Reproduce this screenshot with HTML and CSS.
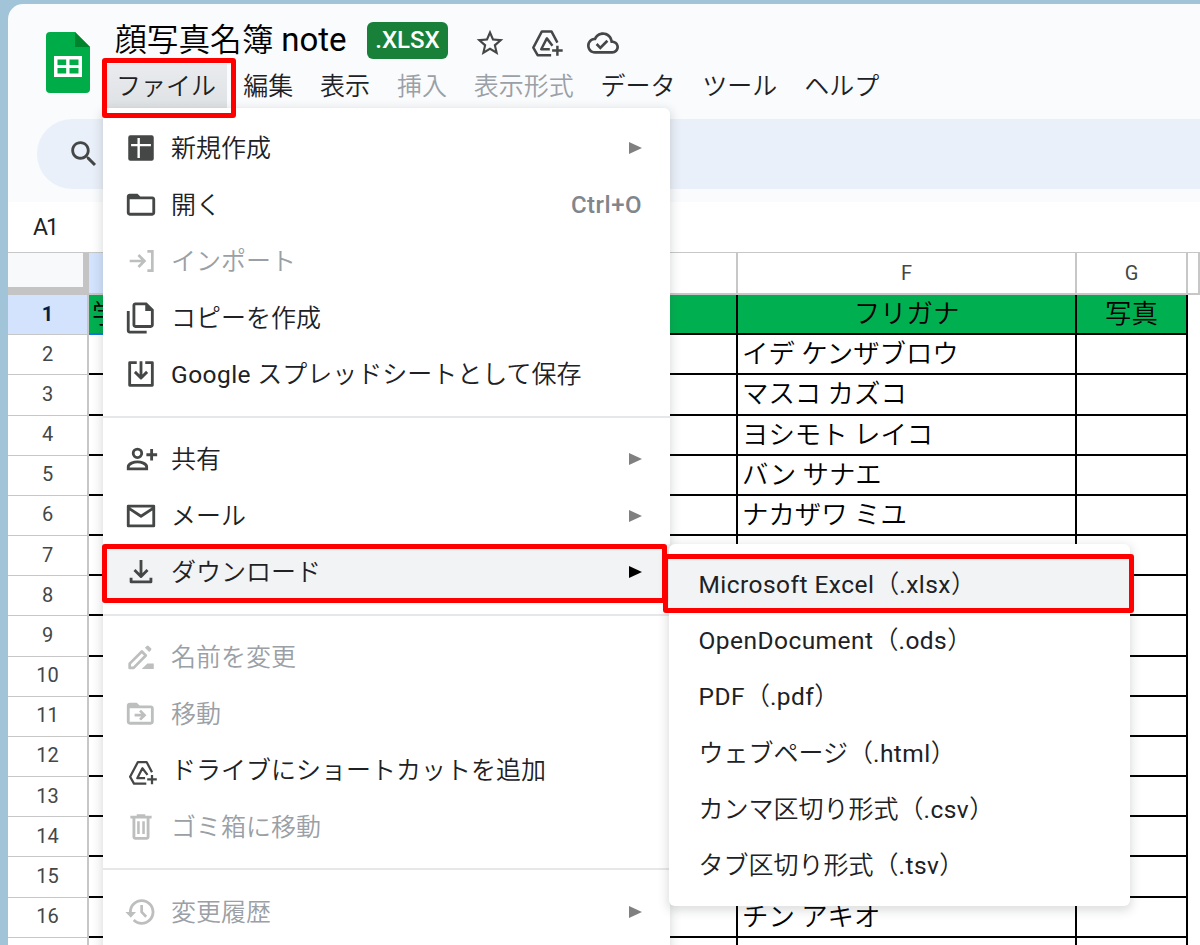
FILE: index.html
```html
<!DOCTYPE html>
<html lang="ja">
<head>
    <meta charset="UTF-8">
    <meta name="viewport" content="width=device-width, initial-scale=1.0">
    <title>顔写真名簿 note</title>
    <link rel="stylesheet" href="styles.css">
</head>
<body>
    <!-- Shared icon shapes -->
    <svg class="sprite">
        <symbol id="drive-add" viewBox="0 0 100 84">
            <path d="M80 41L62 7H33L7 56L20 79H61M65 50L48 28L31 61H57M80 50v31M64 65h32" fill="none" stroke="currentColor" stroke-width="7.500" stroke-linejoin="round"/>
        </symbol>
    </svg>

    <div class="window">
        <header class="header">
            <svg class="logo" viewBox="0 0 44 61">
                <path fill="#00ac47" d="M4 0h25l15 15v42a4 4 0 0 1-4 4H4a4 4 0 0 1-4-4V4a4 4 0 0 1 4-4z"/>
                <path fill="#00832d" d="M29 0l15 15H29z"/>
                <path fill="#fff" fill-rule="evenodd" d="M8 24h28v21H8zM11.500 27.500v5.500h8.700v-5.500zM23.500 27.500v5.500h9v-5.500zM11.500 36v5.500h8.700V36zM23.500 36v5.500h9V36z"/>
            </svg>
            <div class="header-main">
                <div class="title-row">
                    <h1 class="doc-title">顔写真名簿 <span class="latin">note</span></h1>
                    <span class="badge">.XLSX</span>
                    <svg class="title-icon star" viewBox="0 0 24 24"><path d="M22 9.240l-7.190-.62L12 2 9.190 8.630 2 9.240l5.460 4.730L5.820 21 12 17.270 18.180 21l-1.630-7.030L22 9.240zM12 15.400l-3.760 2.270 1-4.280-3.320-2.880 4.380-.38L12 6.100l1.710 4.040 4.380.38-3.320 2.880 1 4.280L12 15.400z"/></svg>
                    <svg class="title-icon drive"><use href="#drive-add"/></svg>
                    <svg class="title-icon cloud" viewBox="0 0 24 24"><path d="M19.350 10.040C18.670 6.590 15.640 4 12 4 9.110 4 6.600 5.640 5.350 8.040 2.340 8.360 0 10.910 0 14c0 3.310 2.690 6 6 6h13c2.760 0 5-2.240 5-5 0-2.640-2.050-4.780-4.650-4.960zM19 18H6c-2.210 0-4-1.790-4-4 0-2.050 1.530-3.760 3.560-3.970l1.070-.11.500-.95C8.080 7.140 9.940 6 12 6c2.620 0 4.880 1.860 5.390 4.430l.3 1.500 1.530.11c1.560.1 2.780 1.410 2.780 2.960 0 1.650-1.350 3-3 3zm-9-3.820l-2.090-2.090L6.500 13.500 10 17l6.010-6.010-1.410-1.410z"/></svg>
                </div>
                <nav class="menubar">
                    <span class="menubar-item active">ファイル</span>
                    <span class="menubar-item">編集</span>
                    <span class="menubar-item">表示</span>
                    <span class="menubar-item disabled">挿入</span>
                    <span class="menubar-item disabled">表示形式</span>
                    <span class="menubar-item">データ</span>
                    <span class="menubar-item">ツール</span>
                    <span class="menubar-item">ヘルプ</span>
                </nav>
            </div>
        </header>

        <div class="toolbar">
            <svg class="icon" viewBox="0 0 24 24"><path d="M15.500 14h-.79l-.28-.27C15.410 12.590 16 11.110 16 9.500 16 5.910 13.090 3 9.500 3S3 5.910 3 9.500 5.910 16 9.500 16c1.610 0 3.090-.59 4.230-1.570l.27.28v.79l5 4.990L20.490 19l-4.990-5zm-6 0C7.010 14 5 11.990 5 9.500S7.010 5 9.500 5 14 7.010 14 9.500 11.990 14 9.500 14z"/></svg>
        </div>

        <div class="formula-bar">A1</div>

        <div class="sheet">
            <div class="sheet-row head">
                <div class="corner"></div>
                <div class="col-head selected"></div>
                <div class="col-head"></div>
                <div class="col-head">F</div>
                <div class="col-head">G</div>
                <div class="col-head"></div>
            </div>
            <div class="sheet-row titles">
                <div class="row-head selected">1</div>
                <div class="cell current">学</div><div class="cell"></div><div class="cell">フリガナ</div><div class="cell">写真</div>
            </div>
            <div class="sheet-row"><div class="row-head">2</div><div class="cell"></div><div class="cell"></div><div class="cell">イデ ケンザブロウ</div><div class="cell"></div></div>
            <div class="sheet-row"><div class="row-head">3</div><div class="cell"></div><div class="cell"></div><div class="cell">マスコ カズコ</div><div class="cell"></div></div>
            <div class="sheet-row"><div class="row-head">4</div><div class="cell"></div><div class="cell"></div><div class="cell">ヨシモト レイコ</div><div class="cell"></div></div>
            <div class="sheet-row"><div class="row-head">5</div><div class="cell"></div><div class="cell"></div><div class="cell">バン サナエ</div><div class="cell"></div></div>
            <div class="sheet-row"><div class="row-head">6</div><div class="cell"></div><div class="cell"></div><div class="cell">ナカザワ ミユ</div><div class="cell"></div></div>
            <div class="sheet-row"><div class="row-head">7</div><div class="cell"></div><div class="cell"></div><div class="cell"></div><div class="cell"></div></div>
            <div class="sheet-row"><div class="row-head">8</div><div class="cell"></div><div class="cell"></div><div class="cell"></div><div class="cell"></div></div>
            <div class="sheet-row"><div class="row-head">9</div><div class="cell"></div><div class="cell"></div><div class="cell"></div><div class="cell"></div></div>
            <div class="sheet-row"><div class="row-head">10</div><div class="cell"></div><div class="cell"></div><div class="cell"></div><div class="cell"></div></div>
            <div class="sheet-row"><div class="row-head">11</div><div class="cell"></div><div class="cell"></div><div class="cell"></div><div class="cell"></div></div>
            <div class="sheet-row"><div class="row-head">12</div><div class="cell"></div><div class="cell"></div><div class="cell"></div><div class="cell"></div></div>
            <div class="sheet-row"><div class="row-head">13</div><div class="cell"></div><div class="cell"></div><div class="cell"></div><div class="cell"></div></div>
            <div class="sheet-row"><div class="row-head">14</div><div class="cell"></div><div class="cell"></div><div class="cell"></div><div class="cell"></div></div>
            <div class="sheet-row"><div class="row-head">15</div><div class="cell"></div><div class="cell"></div><div class="cell"></div><div class="cell"></div></div>
            <div class="sheet-row"><div class="row-head">16</div><div class="cell"></div><div class="cell"></div><div class="cell">チン アキオ</div><div class="cell"></div></div>
            <div class="sheet-row"><div class="row-head"></div><div class="cell"></div><div class="cell"></div><div class="cell"></div><div class="cell"></div></div>
        </div>
    </div>

    <!-- File menu -->
    <div class="menu file-menu">
        <div class="menu-item">
            <svg class="icon" viewBox="0 0 24 24"><path fill-rule="evenodd" d="M4.500 3h15A1.500 1.500 0 0 1 21 4.500v15a1.500 1.500 0 0 1-1.500 1.500h-15A1.500 1.500 0 0 1 3 19.500v-15A1.500 1.500 0 0 1 4.500 3zM9.500 5v4.200H5v1.600h4.500V19h1.700v-8.200H19V9.200h-7.800V5z"/></svg>
            <span class="label">新規作成</span><span class="arrow"></span>
        </div>
        <div class="menu-item">
            <svg class="icon" viewBox="0 0 24 24"><path d="M20 6h-8.500l-2-2H4c-1.100 0-2 .9-2 2v11.500c0 1.100.9 2 2 2h16c1.100 0 2-.9 2-2V8c0-1.100-.9-2-2-2zm0 11.500H4V8h16v9.500z"/></svg>
            <span class="label">開く</span><span class="shortcut">Ctrl+O</span>
        </div>
        <div class="menu-item disabled">
            <svg class="icon" viewBox="0 0 24 24"><path d="M4 12h10.500M10.200 7.800l4.200 4.200-4.200 4.200M16.500 5.200H20v13.600h-3.500" fill="none" stroke="currentColor" stroke-width="1.900"/></svg>
            <span class="label">インポート</span>
        </div>
        <div class="menu-item">
            <svg class="icon" viewBox="0 0 24 24"><path d="M16 1H8C6.900 1 6 1.900 6 3v14c0 1.100.9 2 2 2h11c1.100 0 2-.9 2-2V6l-5-5zM8 17V3h7v4h4v10zM4 7H2v14c0 1.100.9 2 2 2h12v-2H4z"/></svg>
            <span class="label">コピーを作成</span>
        </div>
        <div class="menu-item">
            <svg class="icon" viewBox="0 0 24 24"><path d="M9 4H4v16h16V4h-5M12 3v11M7.700 10.500l4.300 4.300 4.300-4.300" fill="none" stroke="currentColor" stroke-width="2" stroke-linejoin="round"/></svg>
            <span class="label"><span class="latin">Google</span> スプレッドシートとして保存</span>
        </div>
        <hr class="divider">
        <div class="menu-item">
            <svg class="icon" viewBox="0 0 24 24"><g fill="none" stroke="currentColor" stroke-width="2"><circle cx="9.500" cy="8" r="3"/><path d="M3 19v-1.500c0-2.200 4-3.500 6.500-3.500s6.500 1.300 6.500 3.500V19zM19.500 5v8M15.800 9h7.600"/></g></svg>
            <span class="label">共有</span><span class="arrow"></span>
        </div>
        <div class="menu-item">
            <svg class="icon" viewBox="0 0 24 24"><path d="M3 5h18v14H3zM3 6.300l9 5.900 9-5.900" fill="none" stroke="currentColor" stroke-width="2" stroke-linejoin="round"/></svg>
            <span class="label">メール</span><span class="arrow"></span>
        </div>
        <div class="menu-item hover">
            <svg class="icon" viewBox="0 0 24 24"><path d="M12 3.500V15M7.400 10.600l4.600 4.600 4.600-4.600M5 16v3h14v-3" fill="none" stroke="currentColor" stroke-width="2" stroke-linejoin="round"/></svg>
            <span class="label">ダウンロード</span><span class="arrow"></span>
        </div>
        <hr class="divider">
        <div class="menu-item disabled">
            <svg class="icon" viewBox="0 0 24 24"><path d="M12.500 20.500h8.500v-4h-4.500z"/><path d="M14.800 5.500l1.200-1.200a1 1 0 0 1 1.400 0l1.600 1.600a1 1 0 0 1 0 1.400l-1.200 1.200z"/><path d="M4 19.700v-3l8.600-8.600 2.800 2.800L6.800 19.700z" fill="none" stroke="currentColor" stroke-width="1.900" stroke-linejoin="round"/></svg>
            <span class="label">名前を変更</span>
        </div>
        <div class="menu-item disabled">
            <svg class="icon" viewBox="0 0 24 24"><path d="M19 6h-8L9 4H4c-1.100 0-2 .9-2 2v11.500c0 1.100.9 2 2 2h15c1.100 0 2-.9 2-2V8c0-1.100-.9-2-2-2zm0 11.500H4V8h15v9.500z"/><path d="M7.500 12.800h6.500M11.300 9.600l3.200 3.200-3.200 3.200" fill="none" stroke="currentColor" stroke-width="1.900"/></svg>
            <span class="label">移動</span>
        </div>
        <div class="menu-item">
            <svg class="icon drive"><use href="#drive-add"/></svg>
            <span class="label">ドライブにショートカットを追加</span>
        </div>
        <div class="menu-item disabled">
            <svg class="icon" viewBox="0 0 24 24"><path d="M15 4V3H9v1H4.500v2H6v13c0 1.100.9 2 2 2h8c1.100 0 2-.9 2-2V6h1.500V4zm1 15H8V6h8zM9.300 8h1.800v9H9.300zM12.900 8h1.800v9h-1.800z"/></svg>
            <span class="label">ゴミ箱に移動</span>
        </div>
        <hr class="divider">
        <div class="menu-item disabled">
            <svg class="icon" viewBox="0 0 24 24"><path d="M12.500 3c-4.970 0-9 4.030-9 9H1l3.700 3.890.07.14L8.500 12H5.500c0-3.870 3.130-7 7-7s7 3.130 7 7-3.130 7-7 7c-1.930 0-3.680-.79-4.940-2.060l-1.420 1.420C7.770 19.990 10.010 21 12.500 21c4.970 0 9-4.030 9-9s-4.030-9-9-9zm-1 4v5.400l3.500 3.600 1.300-1.300-2.900-3V7z"/></svg>
            <span class="label">変更履歴</span><span class="arrow"></span>
        </div>
    </div>

    <!-- Download submenu -->
    <div class="menu submenu">
        <div class="menu-item hover"><span class="label"><span class="latin">Microsoft Excel</span>（<span class="latin">.xlsx</span>）</span></div>
        <div class="menu-item"><span class="label"><span class="latin">OpenDocument</span>（<span class="latin">.ods</span>）</span></div>
        <div class="menu-item"><span class="label"><span class="latin">PDF</span>（<span class="latin">.pdf</span>）</span></div>
        <div class="menu-item"><span class="label">ウェブページ（<span class="latin">.html</span>）</span></div>
        <div class="menu-item"><span class="label">カンマ区切り形式（<span class="latin">.csv</span>）</span></div>
        <div class="menu-item"><span class="label">タブ区切り形式（<span class="latin">.tsv</span>）</span></div>
    </div>

    <!-- Red callouts -->
    <div class="callout callout-file"></div>
    <div class="callout callout-download"></div>
    <div class="callout callout-excel"></div>
</body>
</html>
```

FILE: styles.css
```css
* {
    box-sizing: border-box;
}

body {
    font-family: Roboto, "Noto Sans CJK JP", sans-serif;
    font-weight: 350;
    font-size: 25px;
    margin: 0;
    height: 945px;
    padding: 4px 0 0 8px;
    background-color: #a1c4d8;
    color: #202124;
    position: relative;
    overflow: hidden;
    white-space: nowrap;
}

.sprite {
    position: absolute;
    width: 0;
    height: 0;
}

.latin {
    font-weight: 400;
}

.window {
    height: 941px;
    background-color: #f9fbfd;
    border-top-left-radius: 15px;
    overflow: hidden;
}

/* Header */
.header {
    display: flex;
    height: 115px;
    padding-left: 38px;
}

.logo {
    width: 44px;
    height: 61px;
    margin-top: 28px;
}

.header-main {
    margin-left: 9px;
}

.title-row {
    display: flex;
    align-items: center;
    height: 60px;
    padding: 12px 0 0 16px;
}

.doc-title {
    margin: 0;
    width: 252px;
    font-size: 31.700px;
    font-weight: 350;
    line-height: 44px;
    color: #000;
}

.doc-title .latin {
    font-size: 33px;
}

.badge {
    width: 81px;
    height: 37px;
    line-height: 37px;
    border-radius: 6px;
    background-color: #188038;
    color: #fff;
    font-size: 24px;
    font-weight: 500;
    text-align: center;
}

.title-icon {
    fill: currentColor;
    color: #444746;
    margin-top: 5px;
}

.title-icon.star {
    width: 32px;
    height: 32px;
    margin-left: 26px;
}

.title-icon.drive {
    width: 33px;
    height: 28px;
    margin-left: 25px;
}

.title-icon.cloud {
    width: 32px;
    height: 32px;
    margin-left: 23px;
}

.menubar {
    display: flex;
    gap: 26.800px;
    height: 44px;
    line-height: 45px;
}

.menubar-item.active {
    width: 124px;
    padding-left: 13px;
    margin: 0 -10.500px 0 4px;
    background: linear-gradient(#e9ebee, #dfe2e5);
}

.disabled {
    color: #9aa0a6;
}

/* Toolbar and name box */
.toolbar {
    display: flex;
    align-items: center;
    height: 70px;
    margin: 0 0 13px 29px;
    padding-left: 30px;
    border-radius: 35px 0 0 35px;
    background-color: #eaf0f9;
}

.icon {
    width: 34px;
    height: 34px;
    fill: currentColor;
    color: #444746;
    flex-shrink: 0;
}

.formula-bar {
    height: 51px;
    padding-left: 25px;
    line-height: 51px;
    background-color: #fff;
    border-bottom: 1px solid #c7c7c7;
    font-size: 23px;
    font-weight: 400;
    letter-spacing: -2px;
}

/* Sheet */
.sheet {
    background-color: #fff;
}

.sheet-row {
    display: grid;
    grid-template-columns: 81px 281px 368px 339px 111px 1fr;
    height: 40.180px;
}

.sheet-row.head {
    height: 42px;
}

.corner {
    background-color: #f8f9fa;
    border: solid #c4c4c4;
    border-width: 0 6px 8px 0;
}

.col-head,
.row-head {
    display: flex;
    align-items: center;
    justify-content: center;
    font-size: 20px;
    font-weight: 400;
    color: #444746;
    border: solid #c7c7c7;
    border-width: 0 2px 2px 0;
}

.row-head {
    padding-bottom: 2px;
    border-width: 0 2px 1px 0;
}

.selected {
    background-color: #d3e3fd;
}

.row-head.selected {
    color: #041e49;
    font-weight: 700;
}

.cell {
    padding-left: 4px;
    border: solid #000;
    border-width: 0 2px 2px 0;
    font-size: 26.400px;
    line-height: 39px;
    color: #000;
    overflow: hidden;
}

.titles .cell {
    background-color: #00b050;
    padding-left: 0;
    text-align: center;
}

.titles .cell.current {
    padding-left: 3px;
    text-align: left;
    border-bottom-color: #1a73e8;
}

/* Menus */
.menu {
    position: absolute;
    background-color: #fff;
    border-radius: 6px;
    padding: 12px 0;
    box-shadow: 0 3px 10px 2px rgba(60, 64, 67, 0.17);
}

.menu .latin {
    font-size: 24.500px;
    letter-spacing: 0.450px;
}

.file-menu {
    left: 103px;
    top: 108px;
    width: 567px;
    height: 860px;
}

.submenu {
    left: 669px;
    top: 544px;
    width: 461px;
    height: 362px;
}

.menu-item {
    display: flex;
    align-items: center;
    height: 56.500px;
    padding: 0 28px 0 21px;
}

.menu-item.disabled .icon {
    color: #bdbebe;
}

.menu-item.hover {
    background-color: #f1f3f4;
}

.submenu .menu-item {
    height: 56.200px;
    padding-left: 29.500px;
}

.label {
    flex: 1;
    padding-bottom: 4px;
}

.icon + .label {
    margin-left: 13px;
}

.icon.drive {
    width: 30px;
    height: 27px;
    margin: 5px 0 0 4px;
}

.arrow {
    border: solid transparent;
    border-width: 6px 0 6px 13px;
    border-left-color: #808080;
}

.hover .arrow {
    border-left-color: #000;
}

.shortcut {
    color: #80868b;
    font-size: 24px;
    font-weight: 500;
    letter-spacing: 0.500px;
}

.divider {
    height: 2px;
    margin: 13px 0 13.500px;
    border: none;
    background-color: #e6e7e8;
}

/* Callouts */
.callout {
    position: absolute;
    border: 5px solid #fe0000;
    border-radius: 3px;
}

.callout-file {
    left: 102px;
    top: 58px;
    width: 134px;
    height: 60px;
}

.callout-download {
    left: 102px;
    top: 544px;
    width: 565px;
    height: 59px;
}

.callout-excel {
    left: 663px;
    top: 554px;
    width: 471px;
    height: 59px;
}
```
